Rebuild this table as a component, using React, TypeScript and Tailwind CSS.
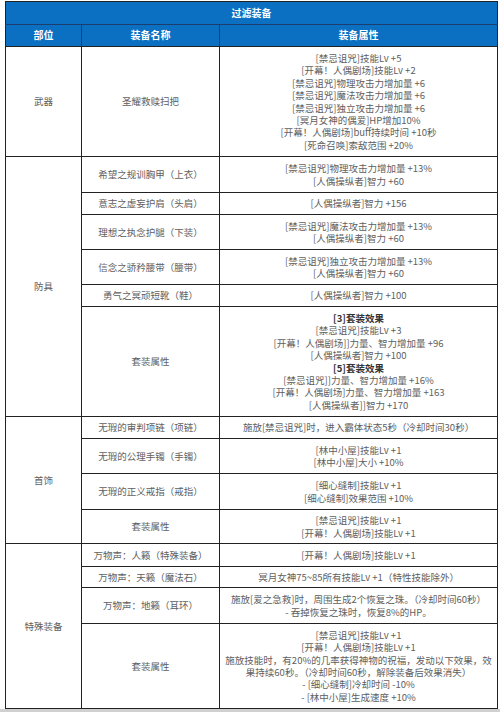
import React from "react";

type Row = { name: React.ReactNode; attrs: React.ReactNode[]; h: number };
type Group = { cat: string; rows: Row[] };

const B = ({ children }: { children: React.ReactNode }) => (
  <span className="font-bold text-[#333]">{children}</span>
);

const groups: Group[] = [
  {
    cat: "武器",
    rows: [
      {
        name: "圣耀救赎扫把",
        h: 110,
        attrs: [
          "[禁忌诅咒]技能Lv +5",
          "[开幕！人偶剧场]技能Lv +2",
          "[禁忌诅咒]物理攻击力增加量 +6",
          "[禁忌诅咒]魔法攻击力增加量 +6",
          "[禁忌诅咒]独立攻击力增加量 +6",
          "[冥月女神的偶爱]HP增加10%",
          "[开幕！人偶剧场]buff持续时间 +10秒",
          "[死命召唤]索敌范围 +20%",
        ],
      },
    ],
  },
  {
    cat: "防具",
    rows: [
      { name: "希望之规训胸甲（上衣）", h: 36, attrs: ["[禁忌诅咒]物理攻击力增加量 +13%", "[人偶操纵者]智力 +60"] },
      { name: "意志之虚妄护肩（头肩）", h: 22, attrs: ["[人偶操纵者]智力 +156"] },
      { name: "理想之执念护腿（下装）", h: 35, attrs: ["[禁忌诅咒]魔法攻击力增加量 +13%", "[人偶操纵者]智力 +60"] },
      { name: "信念之骄矜腰带（腰带）", h: 35, attrs: ["[禁忌诅咒]独立攻击力增加量 +13%", "[人偶操纵者]智力 +60"] },
      { name: "勇气之冥顽短靴（鞋）", h: 22, attrs: ["[人偶操纵者]智力 +100"] },
      {
        name: "套装属性",
        h: 110,
        attrs: [
          <B key="a">[3]套装效果</B>,
          "[禁忌诅咒]技能Lv +3",
          "[开幕！人偶剧场]]力量、智力增加量 +96",
          "[人偶操纵者]智力 +100",
          <B key="b">[5]套装效果</B>,
          "[禁忌诅咒]]力量、智力增加量 +16%",
          "[开幕！人偶剧场]力量、智力增加量 +163",
          "[人偶操纵者]]智力 +170",
        ],
      },
    ],
  },
  {
    cat: "首饰",
    rows: [
      { name: "无瑕的审判项链（项链）", h: 22, attrs: ["施放[禁忌诅咒]时，进入霸体状态5秒（冷却时间30秒）"] },
      { name: "无瑕的公理手镯（手镯）", h: 35, attrs: ["[林中小屋]技能Lv +1", "[林中小屋]大小 +10%"] },
      { name: "无瑕的正义戒指（戒指）", h: 36, attrs: ["[细心缝制]技能Lv +1", "[细心缝制]效果范围 +10%"] },
      { name: "套装属性", h: 34, attrs: ["[禁忌诅咒]技能Lv +1", "[开幕！人偶剧场]技能Lv +1"] },
    ],
  },
  {
    cat: "特殊装备",
    rows: [
      { name: "万物声：人籁（特殊装备）", h: 23, attrs: ["[开幕！人偶剧场]技能Lv +1"] },
      { name: "万物声：天籁（魔法石）", h: 21, attrs: ["冥月女神75~85所有技能Lv +1（特性技能除外）"] },
      {
        name: "万物声：地籁（耳环）",
        h: 36,
        attrs: ["施放[爱之急救]时，周围生成2个恢复之珠。（冷却时间60秒）", "- 吞掉恢复之珠时，恢复8%的HP。"],
      },
      {
        name: "套装属性",
        h: 85,
        attrs: [
          "[禁忌诅咒]技能Lv +1",
          "[开幕！人偶剧场]技能Lv +1",
          "施放技能时，有20%的几率获得神物的祝福，发动以下效果，效果持续60秒。（冷却时间60秒，解除装备后效果消失）",
          "- [细心缝制]冷却时间 -10%",
          "- [林中小屋]生成速度 +10%",
        ],
      },
    ],
  },
];

export default function App() {
  const font = { fontFamily: '"Noto Sans CJK SC", "Noto Sans", sans-serif' };
  return (
    <div className="w-[500px] h-[712px] bg-white overflow-hidden" style={font}>
      <div className="pt-px pl-[5px]">
        <table className="w-[492px] table-fixed border-collapse border border-[#222] text-[9.5px] leading-[12.4px] text-[#606060]">
          <colgroup>
            <col className="w-[76px]" />
            <col className="w-[138px]" />
            <col className="w-[278px]" />
          </colgroup>
          <thead>
            <tr className="h-[23px] bg-[#0b70c2]">
              <th colSpan={3} className="border-b border-[#1c3d6e] text-white font-bold text-[10px] text-center">
                过滤装备
              </th>
            </tr>
            <tr className="h-[22px] bg-[#0b70c2] text-white font-bold text-[10px]">
              <th className="border-r border-[#1c3d6e] border-b border-b-[#222]">部位</th>
              <th className="border-r border-[#1c3d6e] border-b border-b-[#222]">装备名称</th>
              <th className="border-b border-b-[#222]">装备属性</th>
            </tr>
          </thead>
          <tbody>
            {groups.map((g) =>
              g.rows.map((r, i) => (
                <tr key={g.cat + i} style={{ height: r.h }}>
                  {i === 0 && (
                    <td rowSpan={g.rows.length} className="border border-[#222] text-center align-middle">
                      {g.cat}
                    </td>
                  )}
                  <td className="border border-[#222] text-center align-middle">{r.name}</td>
                  <td className="border border-[#222] text-center align-middle px-[3px]">
                    {r.attrs.map((a, k) => (
                      <div key={k}>{a}</div>
                    ))}
                  </td>
                </tr>
              ))
            )}
          </tbody>
        </table>
      </div>
      <div className="h-[4px] bg-[#d0d0d0]" />
    </div>
  );
}
